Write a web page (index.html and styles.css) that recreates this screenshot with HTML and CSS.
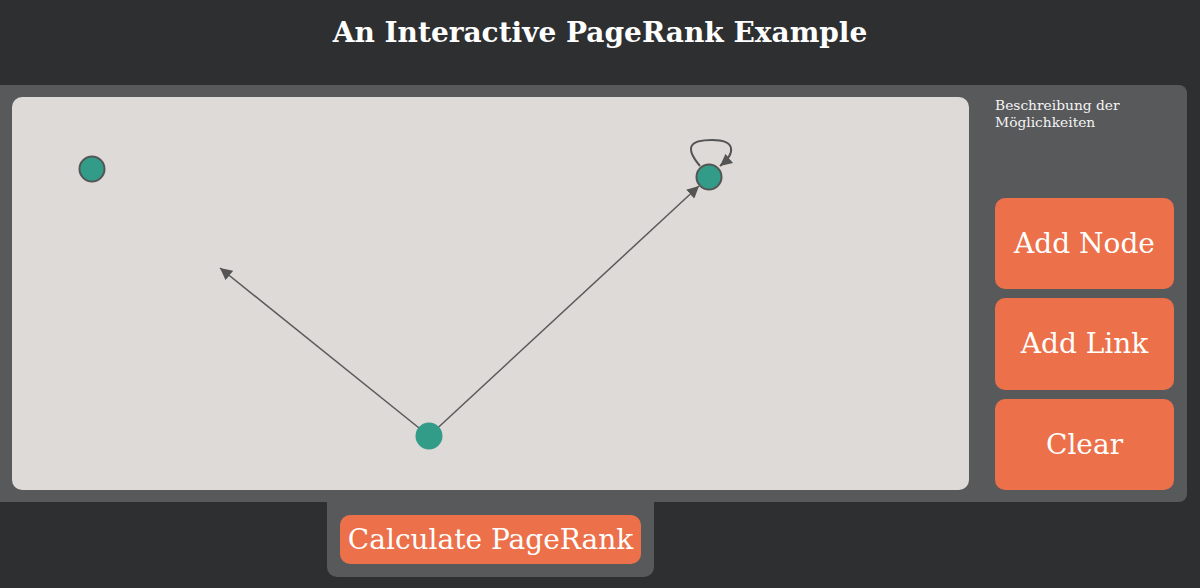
FILE: index.html
```html
<!DOCTYPE html>
<html>
<head>
<meta charset="utf-8">
<link rel="stylesheet" href="styles.css">
</head>
<body>
<header class="header"><h1 class="title">An Interactive PageRank Example</h1></header>
<main class="panel">
  <div class="canvas">
    <svg class="graph" width="957" height="393" viewBox="0 0 957 393">
      <defs>
        <marker id="arrow2" viewBox="0 0 10 10" refX="10" refY="5" markerWidth="12" markerHeight="12" orient="auto" markerUnits="userSpaceOnUse">
          <path d="M0 0 L10 5 L0 10 Z" fill="#545454"/>
        </marker>
      </defs>
      <line x1="417" y1="339" x2="208" y2="171" stroke="#5a5a5a" stroke-width="1.5" marker-end="url(#arrow2)"/>
      <line x1="417" y1="339" x2="687" y2="89" stroke="#5a5a5a" stroke-width="1.5" marker-end="url(#arrow2)"/>
      <path d="M688 69 C672 50, 678 43, 700 43 C724 43, 724 56, 708 69" fill="none" stroke="#545454" stroke-width="2" marker-end="url(#arrow2)"/>
      <circle cx="80" cy="72" r="12.5" fill="#339c88" stroke="#555" stroke-width="2"/>
      <circle cx="697" cy="80" r="12.5" fill="#339c88" stroke="#555" stroke-width="2"/>
      <circle cx="417" cy="339" r="13.5" fill="#339c88"/>
    </svg>
  </div>
  <aside class="sidebar">
    <p class="desc">Beschreibung der Möglichkeiten</p>
    <div class="actions">
      <button class="btn btn-big">Add Node</button>
      <button class="btn btn-big">Add Link</button>
      <button class="btn btn-big">Clear</button>
    </div>
  </aside>
</main>
<footer class="footer">
  <button class="btn btn-calc">Calculate PageRank</button>
</footer>
</body>
</html>
```
FILE: styles.css
```css
html, body {
  margin: 0;
  padding: 0;
  background: #2e2f31;
  font-family: "DejaVu Serif", serif;
  color: #fff;
  height: 588px;
  overflow: hidden;
}
.header {
  height: 85px;
  display: flex;
  justify-content: center;
  align-items: flex-start;
}
.title {
  margin: 14px 0 0;
  font-size: 28px;
  font-weight: bold;
  line-height: 38px;
  color: #fff;
}
.panel {
  width: 1187px;
  height: 417px;
  box-sizing: border-box;
  background: #58595b;
  border-radius: 0 8px 8px 0;
  padding: 12px 13px 12px 12px;
  display: flex;
}
.canvas {
  width: 957px;
  height: 393px;
  background: #dedad7;
  border-radius: 10px;
  flex: none;
}
.graph {
  display: block;
}
.sidebar {
  margin-left: 26px;
  width: 179px;
  display: flex;
  flex-direction: column;
}
.desc {
  margin: 0;
  font-size: 13.8px;
  line-height: 17px;
  color: #f4f4f4;
  flex: 1;
}
.actions {
  display: flex;
  flex-direction: column;
  gap: 9px;
}
.btn {
  font-family: "DejaVu Serif", serif;
  border: none;
  background: #ec7049;
  color: #fff;
  border-radius: 10px;
  padding: 0;
  cursor: pointer;
}
.btn-big {
  height: 91.5px;
  font-size: 28px;
}
.footer {
  margin-left: 327px;
  width: 327px;
  height: 75px;
  box-sizing: border-box;
  background: #58595b;
  border-radius: 0 0 10px 10px;
  padding: 13px;
}
.btn-calc {
  width: 301px;
  height: 49px;
  font-size: 28px;
}
```
